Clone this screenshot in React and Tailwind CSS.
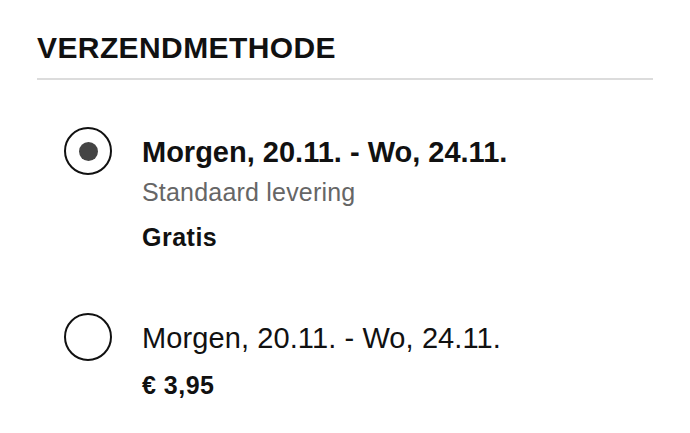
import React, { useState } from "react";

const options = [
  {
    id: "standard",
    date: "Morgen, 20.11. - Wo, 24.11.",
    label: "Standaard levering",
    price: "Gratis",
  },
  {
    id: "express",
    date: "Morgen, 20.11. - Wo, 24.11.",
    price: "€ 3,95",
  },
];

function Radio({ checked }) {
  return (
    <span className="flex h-[48px] w-[48px] shrink-0 items-center justify-center rounded-full border-2 border-[#111]">
      {checked && <span className="h-[19px] w-[19px] rounded-full bg-[#444]" />}
    </span>
  );
}

export default function App() {
  const [selected, setSelected] = useState("standard");

  return (
    <div className="min-h-screen bg-white font-['Liberation_Sans',Arial,sans-serif] text-[#111]">
      <div className="ml-[37px] w-[616px] pt-[33px]">
        <h2 className="border-b-2 border-[#dcdcdc] pb-[15px] text-[30px] font-bold leading-[30px] tracking-[0.4px]">
          VERZENDMETHODE
        </h2>

        <div className="flex flex-col pt-[58px]">
          {options.map((opt, i) => {
            const checked = selected === opt.id;
            return (
              <button
                key={opt.id}
                onClick={() => setSelected(opt.id)}
                className={`flex items-start gap-[30px] text-left ${i > 0 ? "mt-[74px]" : ""}`}
              >
                <span className="ml-[27px] mt-[-11px]">
                  <Radio checked={checked} />
                </span>
                <span className="flex flex-col">
                  <span
                    className={`text-[29px] leading-[29px] ${checked ? "font-bold" : "font-normal tracking-[0.1px]"}`}
                  >
                    {opt.date}
                  </span>
                  {opt.label && (
                    <span className="mt-[13px] text-[25px] leading-[25px] tracking-[0.2px] text-[#666]">
                      {opt.label}
                    </span>
                  )}
                  <span className="mt-[20px] text-[25px] font-bold leading-[25px] tracking-[0.5px]">
                    {opt.price}
                  </span>
                </span>
              </button>
            );
          })}
        </div>
      </div>
    </div>
  );
}
